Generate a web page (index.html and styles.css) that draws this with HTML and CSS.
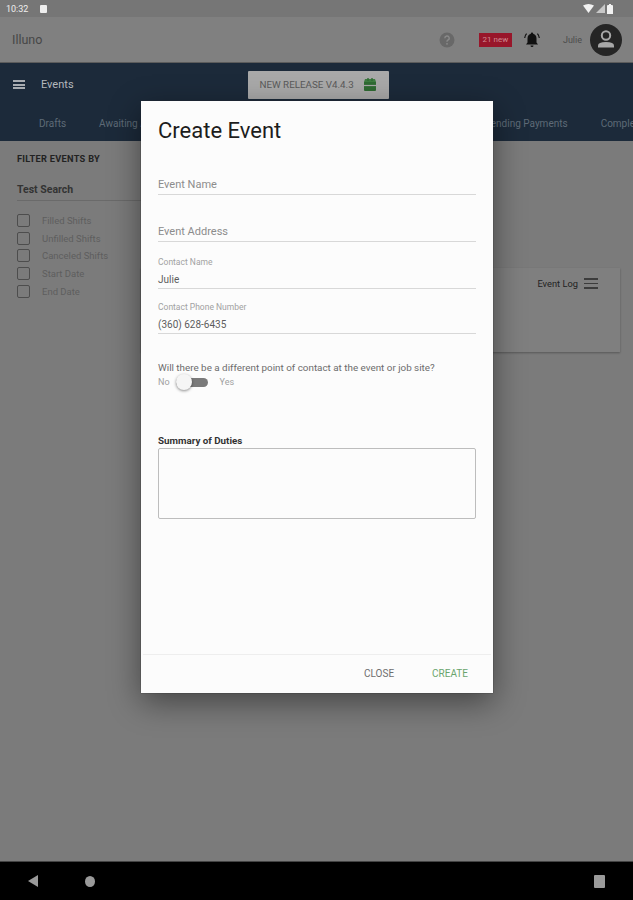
FILE: index.html
```html
<!DOCTYPE html>
<html lang="en">
<head>
  <meta charset="UTF-8" />
  <meta name="viewport" content="width=device-width, initial-scale=1.0" />
  <title>Illuno - Create Event</title>
  <link rel="stylesheet" href="styles.css">
</head>
<body>
  <div class="status-bar">
    <span class="status-time">10:32</span>
    <span class="status-note"></span>
    <span class="status-icons">
      <svg width="11" height="9" viewBox="0 0 11 9"><path d="M0 1.5 Q5.5 -1.5 11 1.5 L5.5 9 Z" fill="#f2f2f2"/></svg>
      <svg width="9" height="9" viewBox="0 0 9 9"><path d="M9 0 V9 H0 Z" fill="#c8c8c8"/></svg>
      <svg width="6" height="10" viewBox="0 0 6 10"><path d="M1 1 H2 V0 H4 V1 H5 Q6 1 6 2 V10 H0 V2 Q0 1 1 1 Z" fill="#f2f2f2"/></svg>
    </span>
  </div>

  <header class="app-bar">
    <span class="logo">Illuno</span>
    <svg class="help-icon" width="16" height="16" viewBox="0 0 16 16">
      <circle cx="8" cy="8" r="7.5" fill="#686868"/>
      <path d="M5.8 6.2 A2.2 2.2 0 1 1 8.8 8.2 Q8 8.6 8 9.8" fill="none" stroke="#8a8a8a" stroke-width="1.4"/>
      <circle cx="8" cy="11.8" r="0.9" fill="#8a8a8a"/>
    </svg>
    <span class="badge">21 new</span>
    <svg class="bell-icon" width="18" height="18" viewBox="0 0 18 18">
      <path d="M9 1.5 A1.2 1.2 0 0 1 10.2 2.7 Q13.5 3.6 13.5 7.5 V11.5 L15 13.5 H3 L4.5 11.5 V7.5 Q4.5 3.6 7.8 2.7 A1.2 1.2 0 0 1 9 1.5 Z" fill="#111"/>
      <path d="M7.5 14.6 H10.5 A1.5 1.5 0 0 1 7.5 14.6 Z" fill="#111"/>
      <path d="M3.6 2.6 Q1.9 4.4 1.7 7 M14.4 2.6 Q16.1 4.4 16.3 7" fill="none" stroke="#111" stroke-width="1.2"/>
    </svg>
    <span class="user-name">Julie</span>
    <span class="avatar">
      <svg width="32" height="32" viewBox="0 0 32 32">
        <circle cx="16" cy="16" r="16" fill="#252525"/>
        <circle cx="16" cy="11.5" r="4.2" fill="none" stroke="#a8a8a8" stroke-width="2"/>
        <path d="M8 23.5 V21.5 Q8 18 16 18 Q24 18 24 21.5 V23.5 Z" fill="#a8a8a8"/>
      </svg>
    </span>
  </header>

  <section class="nav-panel">
    <div class="nav-top">
      <span class="menu-icon"><i></i><i></i><i></i></span>
      <span class="nav-title">Events</span>
      <button class="release-btn">
        NEW RELEASE V4.4.3
        <svg width="14" height="15" viewBox="0 0 14 15">
          <path d="M1 5 H13 V13 Q13 14 12 14 H2 Q1 14 1 13 Z" fill="#2f6b33"/>
          <path d="M2 2 H12 L13 5 H1 Z" fill="#3d7d41"/>
          <path d="M1 8.5 H13" stroke="#a9a9a9" stroke-width="1.2"/>
          <path d="M5 1 V4 M9 1 V4" stroke="#2f6b33" stroke-width="1.4"/>
        </svg>
      </button>
    </div>
    <nav class="tabs">
      <a href="#">Drafts</a>
      <a href="#">Awaiting Approval</a>
      <a href="#" class="tab-pending">Pending Payments</a>
      <a href="#">Completed</a>
    </nav>
  </section>

  <main class="content">
    <aside class="filters">
      <h3>FILTER EVENTS BY</h3>
      <div class="text-search">Test Search</div>
      <ul class="filter-list">
        <li><span class="checkbox"></span>Filled Shifts</li>
        <li><span class="checkbox"></span>Unfilled Shifts</li>
        <li><span class="checkbox"></span>Canceled Shifts</li>
        <li><span class="checkbox"></span>Start Date</li>
        <li><span class="checkbox"></span>End Date</li>
      </ul>
    </aside>
    <section class="events">
      <div class="event-card">
        <span>Event Log</span>
        <span class="log-icon"><i></i><i></i><i></i></span>
      </div>
    </section>
  </main>

  <footer class="system-nav">
    <svg width="12" height="14" viewBox="0 0 12 14"><path d="M11 1 V13 L1 7 Z" fill="#9a9a9a"/></svg>
    <span class="home-dot"></span>
    <span class="recents"></span>
  </footer>

  <div class="dialog">
    <h2>Create Event</h2>
    <div class="dialog-body">
      <div class="field field-first"><span class="placeholder">Event Name</span></div>
      <div class="field"><span class="placeholder">Event Address</span></div>
      <div class="field">
        <label>Contact Name</label>
        <span class="value">Julie</span>
      </div>
      <div class="field field-phone">
        <label>Contact Phone Number</label>
        <span class="value">(360) 628-6435</span>
      </div>
      <p class="question">Will there be a different point of contact at the event or job site?</p>
      <div class="switch-row">
        <span>No</span>
        <span class="switch"><span class="switch-knob"></span></span>
        <span>Yes</span>
      </div>
      <div class="summary-label">Summary of Duties</div>
      <div class="summary-box"></div>
    </div>
    <div class="dialog-actions">
      <button class="btn-close">CLOSE</button>
      <button class="btn-create">CREATE</button>
    </div>
  </div>
</body>
</html>
```

FILE: styles.css
```css
* {
  box-sizing: border-box;
}

body {
  font-family: 'Roboto', sans-serif;
  margin: 0;
  padding: 0;
  height: 900px;
  overflow: hidden;
  background: #7b7b7b;
  color: #333;
  display: flex;
  flex-direction: column;
}

.status-bar {
  height: 17px;
  flex: none;
  background: #767676;
  color: #eee;
  font-size: 9px;
  display: flex;
  align-items: center;
  padding: 0 20px 0 6px;
}

.status-note {
  width: 7px;
  height: 8px;
  margin-left: 12px;
  background: #eee;
  border-radius: 1px;
}

.status-icons {
  margin-left: auto;
  display: flex;
  align-items: center;
  gap: 2px;
}

.app-bar {
  height: 46px;
  flex: none;
  background: #808080;
  border-bottom: 1px solid #5c5c5c;
  display: flex;
  align-items: center;
  padding: 0 11px 0 12px;
}

.logo {
  font-size: 12.5px;
  color: #474747;
}

.help-icon {
  margin-left: auto;
}

.badge {
  margin-left: 24px;
  width: 33px;
  height: 14px;
  background: #98162a;
  color: #d08a92;
  font-size: 8px;
  text-align: center;
  line-height: 14px;
}

.bell-icon {
  margin-left: 11px;
}

.user-name {
  margin-left: 22px;
  font-size: 9px;
  color: #4c4c4c;
}

.avatar {
  margin-left: 8px;
  width: 32px;
  height: 32px;
}

.nav-panel {
  height: 78px;
  flex: none;
  background: #1c2a3a;
}

.nav-top {
  height: 43px;
  display: flex;
  align-items: center;
  padding-left: 13px;
}

.menu-icon {
  width: 12px;
  display: flex;
  flex-direction: column;
  gap: 1.5px;
}

.menu-icon i {
  height: 2px;
  background: #a8acb1;
}

.nav-title {
  margin-left: 16px;
  font-size: 11px;
  color: #b4b8bd;
}

.release-btn {
  margin-left: 174px;
  width: 141px;
  height: 28px;
  border: none;
  border-radius: 1px;
  background: #a9a9a9;
  color: #5a5a5a;
  font-family: inherit;
  font-size: 9.8px;
  display: flex;
  align-items: center;
  justify-content: center;
  gap: 9px;
}

.tabs {
  height: 35px;
  display: flex;
  align-items: center;
  gap: 33px;
  padding-left: 39px;
  font-size: 10px;
  white-space: nowrap;
  overflow: hidden;
}

.tabs a {
  color: #5e6a77;
  text-decoration: none;
}

.tab-pending {
  margin-left: 272px;
}

.content {
  flex: 1;
  display: flex;
  min-height: 0;
}

.filters {
  width: 141px;
  flex: none;
  padding: 12px 0 0 17px;
}

.filters h3 {
  margin: 0;
  font-size: 9.2px;
  line-height: 11px;
  letter-spacing: 0.3px;
  font-weight: 700;
  color: #222;
}

.text-search {
  margin-top: 20px;
  height: 17px;
  font-size: 10.5px;
  line-height: 12px;
  font-weight: 700;
  color: #333;
  border-bottom: 1px solid #6a6a6a;
}

.filter-list {
  list-style: none;
  margin: 11px 0 0;
  padding: 0;
  font-size: 9.5px;
  color: #5e5e5e;
}

.filter-list li {
  height: 17.6px;
  display: flex;
  align-items: center;
  gap: 12px;
}

.checkbox {
  width: 13px;
  height: 13px;
  border: 1.5px solid #4d4d4d;
  border-radius: 2px;
}

.events {
  flex: 1;
  padding: 127px 13px 0 0;
}

.event-card {
  height: 84px;
  background: #7f7f7f;
  box-shadow: 0 1px 2px rgba(0, 0, 0, 0.3);
  display: flex;
  justify-content: flex-end;
  gap: 6px;
  padding: 10px 22px 0 0;
  font-size: 9.3px;
  color: #222;
}

.log-icon {
  width: 14px;
  height: 12px;
  display: flex;
  flex-direction: column;
  gap: 3px;
}

.log-icon i {
  height: 1.5px;
  background: #3c3c3c;
}

.system-nav {
  height: 39px;
  flex: none;
  background: #000;
  border-top: 1px solid #444;
  display: flex;
  align-items: center;
  padding: 0 28px 0 27px;
}

.home-dot {
  margin-left: 46px;
  width: 10px;
  height: 11px;
  border-radius: 50%;
  background: #9a9a9a;
}

.recents {
  margin-left: auto;
  width: 11px;
  height: 13px;
  border-radius: 1px;
  background: #9a9a9a;
}

.dialog {
  position: absolute;
  left: 141px;
  top: 101px;
  width: 352px;
  height: 592px;
  background: #fcfcfc;
  box-shadow: 0 9px 30px rgba(0, 0, 0, 0.45), 0 0 1px #333;
  display: flex;
  flex-direction: column;
}

.dialog h2 {
  margin: 17px 0 0 17px;
  font-size: 22px;
  line-height: 26px;
  font-weight: 400;
  color: #1d1d1d;
}

.dialog-body {
  padding: 0 17px;
}

.field {
  height: 46px;
  margin-top: 1px;
  border-bottom: 1px solid #d8d8d8;
  display: flex;
  flex-direction: column;
  justify-content: flex-end;
  padding-bottom: 3px;
}

.field-first {
  margin-top: 5px;
}

.field-phone {
  height: 45px;
  margin-top: 0;
}

.placeholder {
  font-size: 11px;
  color: #8c8c8c;
}

.field label {
  font-size: 8.5px;
  color: #a2a2a2;
  margin-bottom: 7px;
}

.value {
  font-size: 10px;
  color: #5c5c5c;
}

.question {
  margin: 28px 0 0;
  font-size: 9.85px;
  line-height: 12px;
  color: #6c6c6c;
}

.switch-row {
  margin-top: -1px;
  height: 18px;
  display: flex;
  align-items: center;
  font-size: 9px;
  color: #a0a0a0;
}

.switch {
  margin: 0 12px 0 6px;
  width: 32px;
  height: 9px;
  border-radius: 5px;
  background: #7a7a7a;
  position: relative;
}

.switch-knob {
  position: absolute;
  left: 0;
  top: -4px;
  width: 16px;
  height: 16px;
  border-radius: 50%;
  background: #f5f5f5;
  box-shadow: 0 1px 3px rgba(0, 0, 0, 0.45);
}

.summary-label {
  margin-top: 44px;
  font-size: 9.8px;
  line-height: 12px;
  font-weight: 700;
  color: #333;
}

.summary-box {
  margin-top: 1px;
  height: 71px;
  border: 1px solid #bdbdbd;
  border-radius: 2px;
}

.dialog-actions {
  margin-top: auto;
  height: 39px;
  margin-left: 2px;
  margin-right: 2px;
  border-top: 1px solid #eee;
  padding: 0 23px 2px 0;
  display: flex;
  justify-content: flex-end;
  align-items: center;
  gap: 38px;
}

.dialog-actions button {
  border: none;
  background: none;
  padding: 0;
  font-family: inherit;
  font-size: 10px;
}

.btn-close {
  color: #6e6e6e;
}

.btn-create {
  color: #6aa56d;
}
```
